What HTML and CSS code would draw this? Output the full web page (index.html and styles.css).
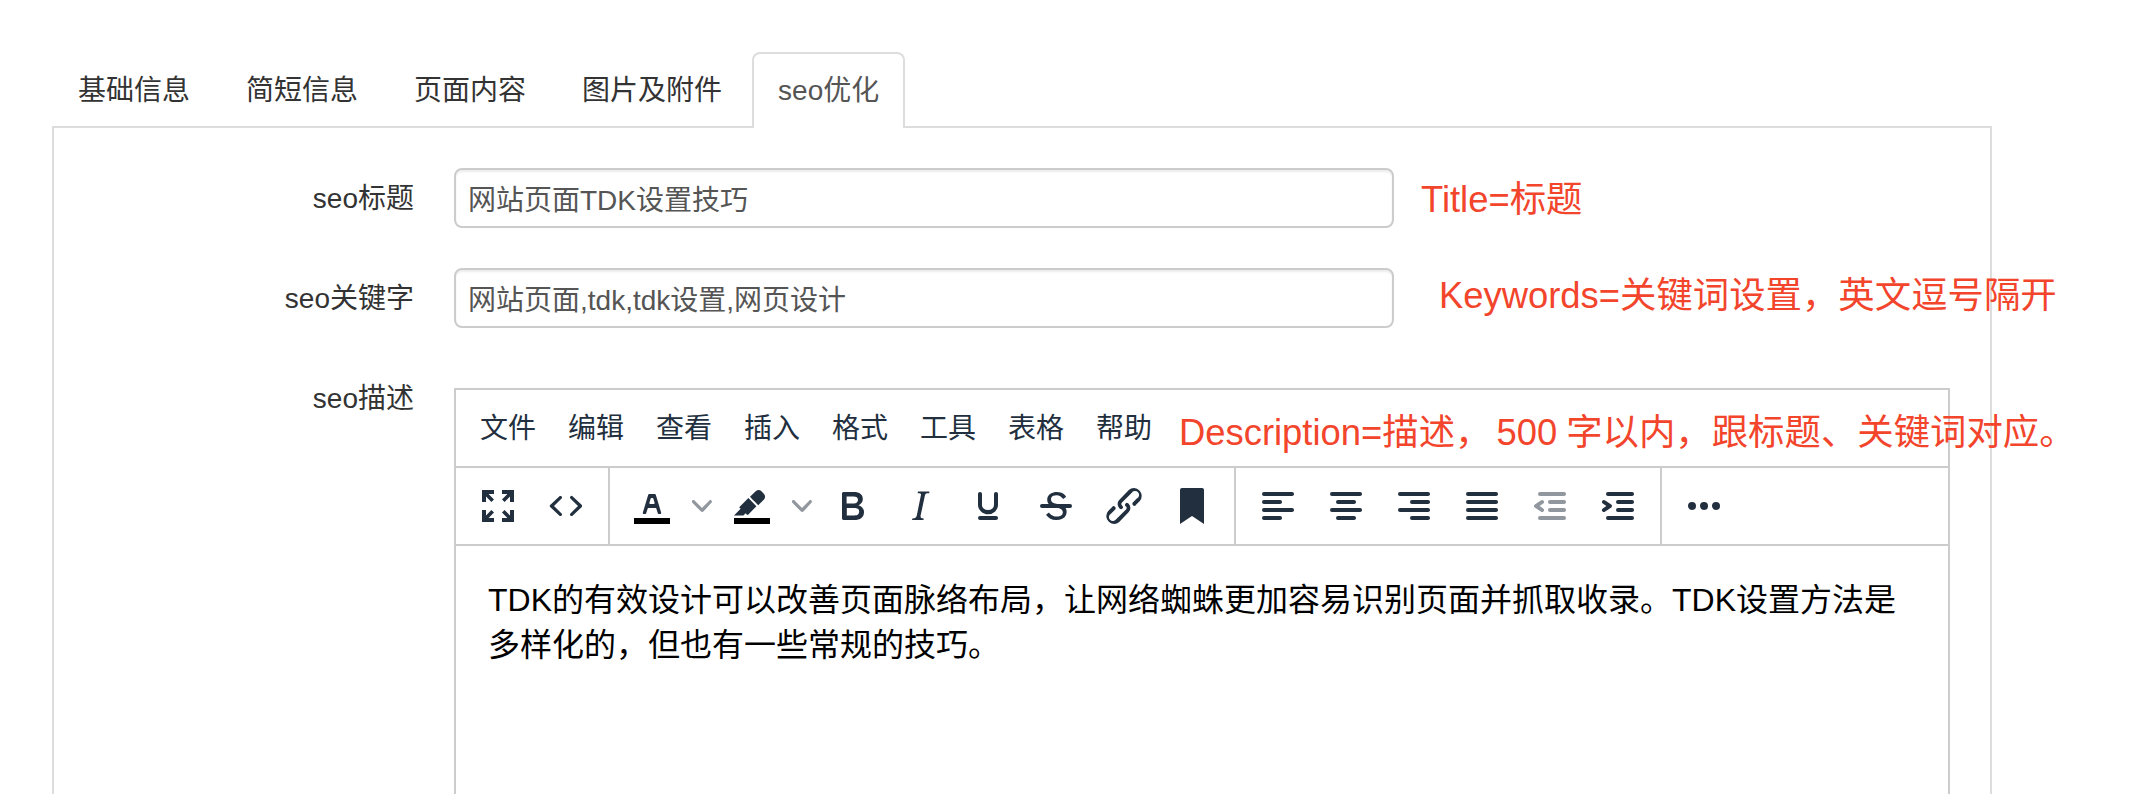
FILE: index.html
```html
<!DOCTYPE html>
<html lang="zh-CN">
<head>
<meta charset="utf-8">
<title>seo优化</title>
<link rel="stylesheet" href="styles.css">
</head>
<body>
<div class="page">
  <ul class="tabs">
    <li class="tab">基础信息</li>
    <li class="tab">简短信息</li>
    <li class="tab">页面内容</li>
    <li class="tab">图片及附件</li>
    <li class="tab active">seo优化</li>
  </ul>
  <div class="panel">
    <div class="row">
      <label class="label">seo标题</label>
      <input class="input" type="text" value="网站页面TDK设置技巧">
    </div>
    <div class="row">
      <label class="label">seo关键字</label>
      <input class="input" type="text" value="网站页面,tdk,tdk设置,网页设计">
    </div>
    <div class="row row-editor">
      <label class="label label-top">seo描述</label>
      <div class="editor">
        <div class="menubar">
          <span class="menu">文件</span><span class="menu">编辑</span><span class="menu">查看</span><span class="menu">插入</span><span class="menu">格式</span><span class="menu">工具</span><span class="menu">表格</span><span class="menu">帮助</span>
        </div>
        <div class="toolbar">
          <div class="group">
            <span class="btn"><svg class="icon" viewBox="0 0 24 24"><path d="M15.3 10l-1.3-1.3 2.7-2.7H14V4h6v6h-2V7.3l-2.7 2.7zM8.7 14l1.3 1.3-2.7 2.7H10v2H4v-6h2v2.7L8.7 14zm6.6 0l2.7 2.7V14h2v6h-6v-2h2.7L14 15.3l1.3-1.3zM8.7 10L6 7.3V10H4V4h6v2H7.3L10 8.7 8.7 10z"/></svg></span>
            <span class="btn"><svg class="icon" viewBox="0 0 24 24"><path d="M9.8 15.7c.3.3.3.8 0 1-.3.4-.9.4-1.2 0l-4.4-4.1a.8.8 0 0 1 0-1.2l4.4-4.2c.3-.3.9-.3 1.2 0 .3.3.3.8 0 1.1L6 12l3.8 3.7zM14.2 15.7c-.3.3-.3.8 0 1 .3.4.9.4 1.2 0l4.4-4.1c.3-.3.3-.9 0-1.2l-4.4-4.2a.8.8 0 0 0-1.2 0c-.3.3-.3.8 0 1.1L18 12l-3.8 3.7z"/></svg></span>
          </div>
          <div class="group">
            <span class="btn"><svg class="icon" viewBox="0 0 24 24"><path class="swatch" d="M3 18h18v3H3z"/><path d="M8.7 16h-.8a.5.5 0 0 1-.5-.6l2.7-9c.1-.3.3-.4.5-.4h2.8c.2 0 .4.1.5.4l2.7 9a.5.5 0 0 1-.5.6h-.8a.5.5 0 0 1-.4-.4l-.7-2.2c0-.3-.3-.4-.5-.4h-3.4c-.2 0-.4.1-.5.4l-.7 2.2c0 .3-.2.4-.4.4zm2.6-7.6l-.6 2a.5.5 0 0 0 .5.6h1.6a.5.5 0 0 0 .5-.6l-.6-2c0-.3-.3-.4-.5-.4h-.4c-.2 0-.4.1-.5.4z"/></svg></span>
            <span class="chev"><svg class="chev-icon" viewBox="0 0 10 10"><path d="M8.7 2.2c.3-.3.8-.3 1 0 .4.4.4.9 0 1.2L5.7 7.8c-.3.3-.9.3-1.2 0L.2 3.4a.8.8 0 0 1 0-1.2c.3-.3.8-.3 1.1 0L5 6l3.7-3.8z"/></svg></span>
            <span class="btn"><svg class="icon" viewBox="0 0 24 24"><path class="swatch" d="M3 18h18v3H3z"/><path d="M7.7 16.7H3l3.3-3.3-.7-.8L10.2 8l4 4.1-4 4.2c-.2.2-.6.2-.8 0l-.6-.7-1.1 1.1zm5-7.5L11 7.4l3-2.9a2 2 0 0 1 2.6 0L18 6c.7.7.7 2 0 2.7l-2.9 2.9-1.8-1.8-.5-.6"/></svg></span>
            <span class="chev"><svg class="chev-icon" viewBox="0 0 10 10"><path d="M8.7 2.2c.3-.3.8-.3 1 0 .4.4.4.9 0 1.2L5.7 7.8c-.3.3-.9.3-1.2 0L.2 3.4a.8.8 0 0 1 0-1.2c.3-.3.8-.3 1.1 0L5 6l3.7-3.8z"/></svg></span>
            <span class="btn"><svg class="icon" viewBox="0 0 24 24"><path d="M7.8 19c-.3 0-.5 0-.6-.2l-.2-.5V5.7c0-.2 0-.4.2-.5l.6-.2h5c1.5 0 2.7.3 3.5 1 .7.6 1.1 1.4 1.1 2.5a3 3 0 0 1-.6 1.9c-.4.6-1 1-1.6 1.2.4.1.9.3 1.3.6s.8.7 1 1.2c.4.4.5 1 .5 1.6 0 1.3-.4 2.3-1.3 3-.8.7-2.1 1-3.8 1H7.8zm5-8.3c.6 0 1.2-.1 1.6-.5.4-.3.6-.7.6-1.3 0-1.1-.8-1.7-2.3-1.7H9.3v3.5h3.4zm.5 6c.7 0 1.3-.1 1.7-.4.4-.4.6-.9.6-1.5s-.2-1-.7-1.4c-.4-.3-1-.4-2-.4H9.4v3.8h4z"/></svg></span>
            <span class="btn"><svg class="icon" viewBox="0 0 24 24"><path d="M16.7 4.7l-.1.9h-.3c-.6 0-1 0-1.4.3-.3.3-.4.6-.5 1.1l-2.1 9.8v.6c0 .5.4.8 1.4.8h.2l-.2.8H8l.2-.8h.2c1.1 0 1.8-.5 2-1.5l2-9.8.1-.5c0-.6-.4-.8-1.4-.8h-.3l.2-.9h5.8z"/></svg></span>
            <span class="btn"><svg class="icon" viewBox="0 0 24 24"><path d="M16 5c.6 0 1 .4 1 1v5.5a4 4 0 0 1-.4 1.8l-1 1.4a5.3 5.3 0 0 1-5.5 1 5 5 0 0 1-1.6-1c-.5-.4-.8-.9-1.1-1.4a4 4 0 0 1-.4-1.8V6c0-.6.4-1 1-1s1 .4 1 1v5.5c0 .3 0 .6.2 1l.6.7a3.3 3.3 0 0 0 2.2.8 3.4 3.4 0 0 0 2.2-.8c.3-.2.4-.5.6-.8l.2-.9V6c0-.6.4-1 1-1zM8 17h8c.6 0 1 .4 1 1s-.4 1-1 1H8a1 1 0 0 1 0-2z"/></svg></span>
            <span class="btn"><svg class="icon" viewBox="0 0 24 24"><path d="M15.6 8.5c-.5-.7-1-1.1-1.3-1.3-.6-.4-1.3-.6-2-.6-2.7 0-2.8 1.7-2.8 2.1 0 1.6 1.8 2 3.2 2.3 4.4.9 4.6 2.8 4.6 3.9 0 1.4-.7 4.1-5 4.1A6.2 6.2 0 0 1 7 16.4l1.5-1.1c.4.6 1.6 2 3.7 2 1.6 0 2.5-.4 3-1.2.4-.8.3-2-.8-2.6-.7-.4-1.6-.7-2.9-1-1-.2-3.9-.8-3.9-3.6C7.6 6 10.3 5 12.4 5c2.9 0 4.2 1.6 4.7 2.4l-1.5 1.1z"/><path d="M5 11h14a1 1 0 0 1 0 2H5a1 1 0 0 1 0-2z"/></svg></span>
            <span class="btn"><svg class="icon" viewBox="0 0 24 24"><path d="M6.2 12.3a1 1 0 0 1 1.4 1.4l-2 2a2 2 0 1 0 2.6 2.8l4.8-4.8a1 1 0 0 0 0-1.4 1 1 0 1 1 1.4-1.3 2.9 2.9 0 0 1 0 4L9.6 20a3.9 3.9 0 0 1-5.5-5.5l2-2zm11.6-.6a1 1 0 0 1-1.4-1.4l2-2a2 2 0 1 0-2.6-2.8L11 10.3a1 1 0 0 0 0 1.4A1 1 0 1 1 9.6 13a2.9 2.9 0 0 1 0-4L14.4 4a3.9 3.9 0 0 1 5.5 5.5l-2 2z"/></svg></span>
            <span class="btn"><svg class="icon" viewBox="0 0 24 24"><path d="M6 4v17l6-4 6 4V4c0-.6-.4-1-1-1H7a1 1 0 0 0-1 1z"/></svg></span>
          </div>
          <div class="group">
            <span class="btn"><svg class="icon" viewBox="0 0 24 24"><path d="M5 5h14c.6 0 1 .4 1 1s-.4 1-1 1H5a1 1 0 1 1 0-2zm0 4h8c.6 0 1 .4 1 1s-.4 1-1 1H5a1 1 0 1 1 0-2zm0 8h8c.6 0 1 .4 1 1s-.4 1-1 1H5a1 1 0 0 1 0-2zm0-4h14c.6 0 1 .4 1 1s-.4 1-1 1H5a1 1 0 0 1 0-2z"/></svg></span>
            <span class="btn"><svg class="icon" viewBox="0 0 24 24"><path d="M5 5h14c.6 0 1 .4 1 1s-.4 1-1 1H5a1 1 0 1 1 0-2zm3 4h8c.6 0 1 .4 1 1s-.4 1-1 1H8a1 1 0 1 1 0-2zm0 8h8c.6 0 1 .4 1 1s-.4 1-1 1H8a1 1 0 0 1 0-2zm-3-4h14c.6 0 1 .4 1 1s-.4 1-1 1H5a1 1 0 0 1 0-2z"/></svg></span>
            <span class="btn"><svg class="icon" viewBox="0 0 24 24"><path d="M5 5h14c.6 0 1 .4 1 1s-.4 1-1 1H5a1 1 0 1 1 0-2zm6 4h8c.6 0 1 .4 1 1s-.4 1-1 1h-8a1 1 0 0 1 0-2zm0 8h8c.6 0 1 .4 1 1s-.4 1-1 1h-8a1 1 0 0 1 0-2zm-6-4h14c.6 0 1 .4 1 1s-.4 1-1 1H5a1 1 0 0 1 0-2z"/></svg></span>
            <span class="btn"><svg class="icon" viewBox="0 0 24 24"><path d="M5 5h14c.6 0 1 .4 1 1s-.4 1-1 1H5a1 1 0 1 1 0-2zm0 4h14c.6 0 1 .4 1 1s-.4 1-1 1H5a1 1 0 1 1 0-2zm0 4h14c.6 0 1 .4 1 1s-.4 1-1 1H5a1 1 0 0 1 0-2zm0 4h14c.6 0 1 .4 1 1s-.4 1-1 1H5a1 1 0 0 1 0-2z"/></svg></span>
            <span class="btn disabled"><svg class="icon" viewBox="0 0 24 24"><path d="M7 5h12c.6 0 1 .4 1 1s-.4 1-1 1H7a1 1 0 1 1 0-2zm5 4h7c.6 0 1 .4 1 1s-.4 1-1 1h-7a1 1 0 0 1 0-2zm0 4h7c.6 0 1 .4 1 1s-.4 1-1 1h-7a1 1 0 0 1 0-2zm-5 4h12a1 1 0 0 1 0 2H7a1 1 0 0 1 0-2zm1.6-3.8a1 1 0 0 1-1.2 1.6l-3-2a1 1 0 0 1 0-1.6l3-2a1 1 0 0 1 1.2 1.6L6.8 12l1.8 1.2z"/></svg></span>
            <span class="btn"><svg class="icon" viewBox="0 0 24 24"><path d="M7 5h12c.6 0 1 .4 1 1s-.4 1-1 1H7a1 1 0 1 1 0-2zm5 4h7c.6 0 1 .4 1 1s-.4 1-1 1h-7a1 1 0 0 1 0-2zm0 4h7c.6 0 1 .4 1 1s-.4 1-1 1h-7a1 1 0 0 1 0-2zm-5 4h12a1 1 0 0 1 0 2H7a1 1 0 0 1 0-2zm-2.6-3.8L6.2 12l-1.8-1.2a1 1 0 0 1 1.2-1.6l3 2a1 1 0 0 1 0 1.6l-3 2a1 1 0 1 1-1.2-1.6z"/></svg></span>
          </div>
          <div class="group">
            <span class="btn"><svg class="icon" viewBox="0 0 24 24"><path d="M6 10a2 2 0 0 0-2 2c0 1.1.9 2 2 2a2 2 0 0 0 2-2 2 2 0 0 0-2-2zm12 0a2 2 0 0 0-2 2c0 1.1.9 2 2 2a2 2 0 0 0 2-2 2 2 0 0 0-2-2zm-6 0a2 2 0 0 0-2 2c0 1.1.9 2 2 2a2 2 0 0 0 2-2 2 2 0 0 0-2-2z"/></svg></span>
          </div>
        </div>
        <div class="content">
          <p class="para">TDK的有效设计可以改善页面脉络布局，让网络蜘蛛更加容易识别页面并抓取收录。TDK设置方法是多样化的，但也有一些常规的技巧。</p>
        </div>
      </div>
    </div>
  </div>
  <span class="note note-title">Title=标题</span>
  <span class="note note-keywords">Keywords=关键词设置，英文逗号隔开</span>
  <span class="note note-desc">Description=描述，<span class="num">500</span>字以内，跟标题、关键词对应。</span>
</div>
</body>
</html>
```

FILE: styles.css
```css
* { box-sizing: border-box; }

html, body {
  margin: 0;
  height: 794px;
  overflow: hidden;
  background: #fff;
}

body {
  font-family: "Liberation Sans", "Noto Sans CJK SC", sans-serif;
  font-size: 28px;
  line-height: 40px;
  color: #333;
}

.page {
  position: relative;
  padding: 52px 142px 0 52px;
}

.tabs {
  list-style: none;
  display: flex;
  gap: 4px;
  margin: 0;
  padding: 0;
  height: 76px;
}

.tab {
  height: 76px;
  padding: 17px 24px 15px;
  border: 2px solid transparent;
  border-bottom: 0;
  border-radius: 8px 8px 0 0;
  white-space: nowrap;
}

.tab.active {
  position: relative;
  z-index: 1;
  color: #555;
  background: #fff;
  border-color: #ddd;
}

.panel {
  margin-top: -2px;
  height: 800px;
  padding: 40px 0 0;
  border: 2px solid #ddd;
}

.row {
  display: flex;
  align-items: center;
  gap: 40px;
  margin-bottom: 40px;
}

.row-editor {
  align-items: flex-start;
  margin-top: 60px;
}

.label {
  width: 360px;
  flex: none;
  padding-top: 2px;
  text-align: right;
  color: #333;
}

.label-top {
  padding-top: 0;
  line-height: 22px;
}

.input {
  width: 940px;
  height: 60px;
  padding: 0 12px;
  font: inherit;
  color: #555;
  background: #fff;
  border: 2px solid #ccc;
  border-radius: 8px;
  box-shadow: inset 0 2px 2px rgba(0, 0, 0, 0.075);
  outline: none;
}

.editor {
  width: 1496px;
  height: 700px;
  border: 2px solid #ccc;
  color: #222f3e;
}

.menubar {
  display: flex;
  height: 78px;
  padding-left: 8px;
  align-items: center;
  border-bottom: 2px solid #ccc;
}

.menu {
  padding: 2px 16px 0;
  white-space: nowrap;
}

.toolbar {
  display: flex;
  height: 78px;
  border-bottom: 2px solid #ccc;
}

.group {
  display: flex;
  align-items: center;
  padding: 0 8px;
  border-right: 2px solid #ccc;
}

.group:last-child {
  border-right: 0;
}

.btn {
  width: 68px;
  height: 68px;
  display: flex;
  align-items: center;
  justify-content: center;
}

.chev {
  width: 32px;
  height: 68px;
  display: flex;
  align-items: center;
  justify-content: center;
}

.icon {
  width: 48px;
  height: 48px;
  fill: #222f3e;
}

.swatch {
  fill: #000;
}

.disabled .icon {
  fill: rgba(34, 47, 62, 0.5);
}

.chev-icon {
  width: 20px;
  height: 20px;
  fill: rgba(34, 47, 62, 0.5);
}

.content {
  padding: 32px 32px;
  color: #000;
}

.para {
  margin: 0;
  font-size: 32px;
  line-height: 45px;
}

.note {
  position: absolute;
  font-size: 36.4px;
  line-height: 50px;
  color: #f2452c;
  white-space: nowrap;
}

.num {
  margin: 0 9px 0 5px;
}

.note-title { left: 1421px; top: 175px; }
.note-keywords { left: 1439px; top: 271px; }
.note-desc { left: 1179px; top: 408px; }
```
